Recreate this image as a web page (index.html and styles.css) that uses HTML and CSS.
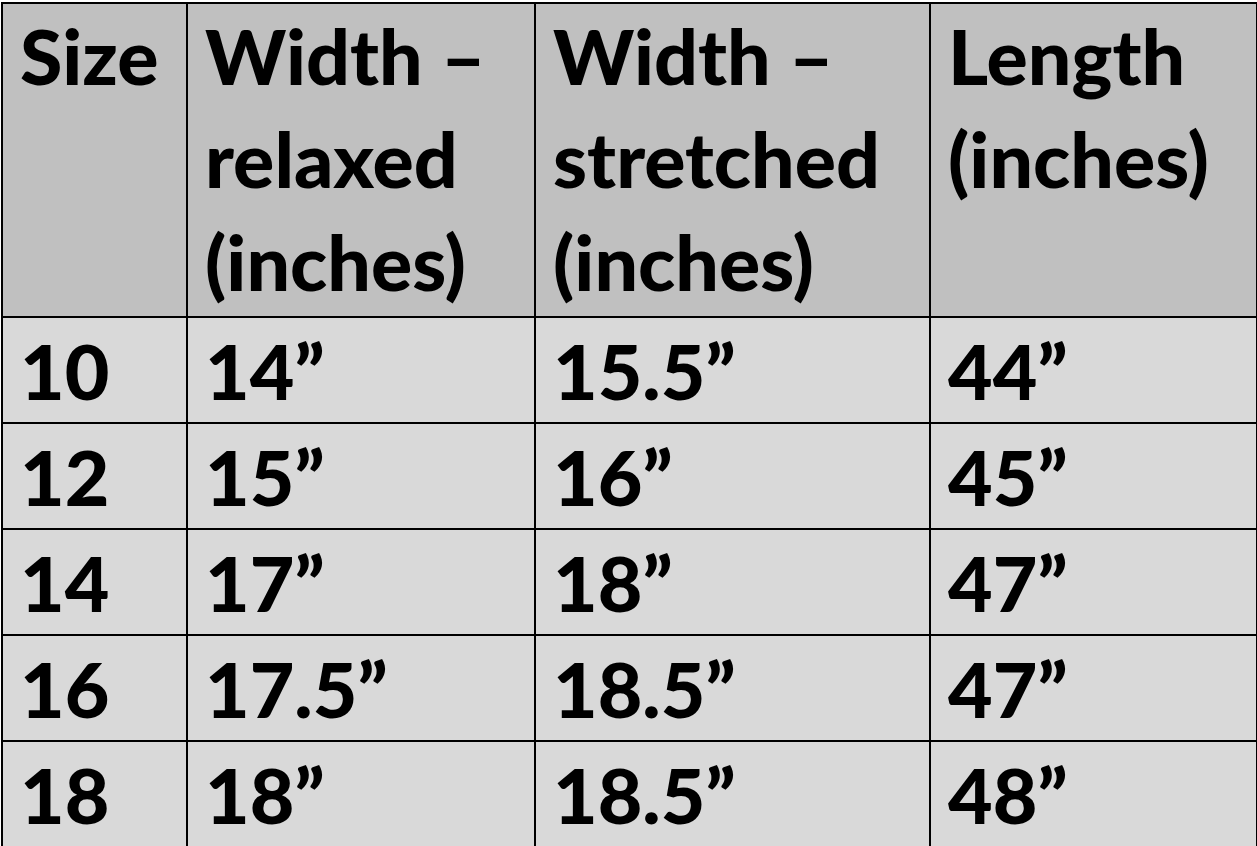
FILE: index.html
```html
<!DOCTYPE html>
<html lang="en">
<head>
    <meta charset="UTF-8">
    <meta name="viewport" content="width=device-width, initial-scale=1.0">
    <title>Size Chart</title>
    <link rel="stylesheet" href="styles.css">
</head>
<body>
    <table class="size-chart">
        <colgroup>
            <col class="col-size">
            <col class="col-relaxed">
            <col class="col-stretched">
            <col class="col-length">
        </colgroup>
        <thead>
            <tr>
                <th>Size</th>
                <th>Width &ndash;<br>relaxed<br>(inches)</th>
                <th>Width &ndash;<br>stretched<br>(inches)</th>
                <th>Length<br>(inches)</th>
            </tr>
        </thead>
        <tbody>
            <tr><td>10</td><td>14&rdquo;</td><td>15.5&rdquo;</td><td>44&rdquo;</td></tr>
            <tr><td>12</td><td>15&rdquo;</td><td>16&rdquo;</td><td>45&rdquo;</td></tr>
            <tr><td>14</td><td>17&rdquo;</td><td>18&rdquo;</td><td>47&rdquo;</td></tr>
            <tr><td>16</td><td>17.5&rdquo;</td><td>18.5&rdquo;</td><td>47&rdquo;</td></tr>
            <tr><td>18</td><td>18&rdquo;</td><td>18.5&rdquo;</td><td>48&rdquo;</td></tr>
        </tbody>
    </table>
</body>
</html>
```

FILE: styles.css
```css
body {
    margin: 0;
    background-color: #ffffff;
}

.size-chart {
    border-collapse: collapse;
    table-layout: fixed;
    width: 1255px;
    margin: 2px 0 0 1px;
    font-family: Lato, "Open Sans", sans-serif;
    font-weight: 900;
    font-size: 77px;
    color: #000000;
}

.col-size { width: 185px; }
.col-relaxed { width: 348px; }
.col-stretched { width: 395px; }
.col-length { width: 327px; }

.size-chart th,
.size-chart td {
    border: 2px solid #000000;
    text-align: left;
    vertical-align: top;
    padding: 0 0 0 17px;
    overflow: hidden;
    white-space: nowrap;
}

.size-chart th {
    background-color: #c0c0c0;
    line-height: 103px;
    height: 312px;
    font-weight: 900;
}

.size-chart td {
    background-color: #d9d9d9;
    height: 104px;
    line-height: 104px;
}
```
